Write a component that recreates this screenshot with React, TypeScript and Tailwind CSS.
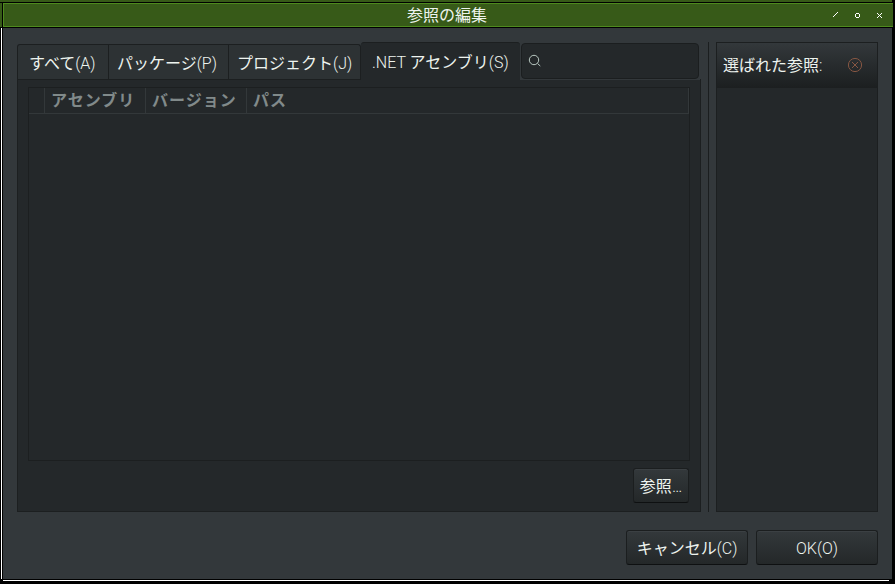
import React from "react";

// Japanese glyphs are set in regular weight, Latin ones stay light.
function Label({ ja, latin }: { ja: string; latin?: string }) {
  return (
    <span>
      <span className="font-normal">{ja}</span>
      {latin}
    </span>
  );
}

function Tab({ ja, latin, className }: { ja: string; latin: string; className: string }) {
  return (
    <div className={`flex h-[35px] shrink-0 items-center border-t border-r border-[#1c1f20] bg-[#2d3234] pt-1 whitespace-nowrap ${className}`}>
      <Label ja={ja} latin={latin} />
    </div>
  );
}

function Button({ ja, latin, className }: { ja: string; latin?: string; className: string }) {
  return (
    <button className={`flex h-[35px] items-center justify-center rounded-[3px] border border-[#1b1e1f] border-b-[#0e1011] bg-gradient-to-b from-[#33383b] to-[#242829] pt-0.5 whitespace-nowrap shadow-[inset_0_1px_0_#3b4043] ${className}`}>
      <Label ja={ja} latin={latin} />
    </button>
  );
}

function Column({ label, className }: { label?: string; className: string }) {
  return (
    <div className={`h-full shrink-0 border-r border-[#33383a] pt-px pl-[6px] leading-[24px] font-bold tracking-[1px] whitespace-nowrap text-[#818a8a] ${className}`}>
      {label}
    </div>
  );
}

export default function App() {
  return (
    <div className="flex h-[584px] w-[895px] flex-col overflow-hidden bg-black font-['Roboto','Noto_Sans_CJK_JP',sans-serif] text-[16px] font-light text-[#eef4ef]">
      <div className="h-[2px] w-[892px] shrink-0 bg-[#375a18]" />
      <header className="mt-px flex h-6 shrink-0 border-l-2 border-[#375a18]">
        <div className="ml-px flex w-[890px] items-center border border-r-0 border-[#4e8a1e] bg-[#375a18]">
          <div className="w-[804px] pt-[2px] pl-[82px] text-center leading-[22px] font-normal">参照の編集</div>
          <svg className="ml-[25px] h-[7px] w-[52px]" viewBox="0 0 52 7" shapeRendering="crispEdges" fill="none" stroke="#fff">
            <path d="M4 .5h1M3 1.5h1M2 2.5h1M1 3.5h1M0 4.5h1" />
            <path d="M23 1.5h3M23 5.5h3M22.5 2v3M26.5 2v3" />
            <path d="M44 1.5h1M48 1.5h1M45 2.5h1M47 2.5h1M46 3.5h1M45 4.5h1M47 4.5h1M44 5.5h1M48 5.5h1" />
          </svg>
        </div>
      </header>
      <div className="mt-px flex h-[551px] shrink-0">
        <div className="mr-px ml-px w-px bg-white" />
        <div className="flex w-[889px] flex-col bg-[#33383b] pt-[14px] pl-[14px]">
          <div className="flex h-[470px]">
            <section className="flex w-[684px] flex-col">
              <div className="flex h-[37px] items-end">
                <Tab ja="すべて" latin="(A)" className="w-[92px] rounded-tl-[3px] border-l pl-[11px]" />
                <Tab ja="パッケージ" latin="(P)" className="w-[120px] pl-[8px]" />
                <Tab ja="プロジェクト" latin="(J)" className="w-[132px] rounded-tr-[3px] pl-[8px]" />
                <div className="flex h-[37px] w-[159px] items-center rounded-t-[3px] border-t border-[#1c1f20] bg-[#24282a] pt-1 pl-[11px] whitespace-nowrap">
                  <span>
                    .NET <span className="font-normal">アセンブリ</span>(S)
                  </span>
                </div>
                <div className="ml-px flex h-[36px] w-[178px] items-center rounded-[4px] border border-[#1b1e1f] bg-[#24282a] pl-[6px]">
                  <svg className="h-[14px] w-[14px]" viewBox="0 0 14 14" fill="none" stroke="#b8c8c1">
                    <circle cx="6" cy="6" r="4.7" />
                    <path d="m9.5 9.5 2.8 2.5" />
                  </svg>
                </div>
              </div>
              <div className="flex h-[433px] w-full flex-col border-r border-b border-l border-[#1c1f20] bg-[#24282a]">
                <div className="flex h-px w-full">
                  <div className="w-[343px] bg-[#1c1f20]" />
                  <div className="ml-[159px] w-[180px] bg-[#33383b]" />
                </div>
                <div className="pt-[7px] pl-[10px]">
                  <div className="h-[374px] w-[662px] border border-[#1c1f20]">
                    <div className="flex h-[26px] w-[660px] border-r border-b border-[#33383a]">
                      <Column className="w-[16px]" />
                      <Column label="アセンブリ" className="w-[101px]" />
                      <Column label="バージョン" className="w-[101px]" />
                      <Column label="パス" className="w-[100px] border-r-0" />
                    </div>
                  </div>
                  <Button ja="参照" latin="…" className="mt-[7px] ml-[605px] w-[56px]" />
                </div>
              </div>
            </section>
            <div className="ml-[7px] h-full w-px bg-[#1b1e1f]" />
            <aside className="ml-[7px] w-[162px] border border-[#1c1f20] bg-[#24282a]">
              <div className="flex h-[45px] items-center bg-gradient-to-b from-[#33383b] to-[#1c1f20] pl-[6px]">
                <span className="w-[124px] whitespace-nowrap">
                  <Label ja="選ばれた参照" latin=":" />
                </span>
                <svg className="-mt-px h-4 w-4" viewBox="0 0 16 16" fill="none" stroke="#865642">
                  <circle cx="8" cy="8" r="6.6" />
                  <path d="m5 5 6 6m0-6-6 6" />
                </svg>
              </div>
            </aside>
          </div>
          <footer className="mt-[18px] flex gap-[8px] pl-[609px]">
            <Button ja="キャンセル" latin="(C)" className="w-[122px]" />
            <Button ja="" latin="OK(O)" className="w-[122px]" />
          </footer>
        </div>
      </div>
      <div className="mt-px ml-[3px] h-px w-[886px] shrink-0 bg-white" />
    </div>
  );
}
